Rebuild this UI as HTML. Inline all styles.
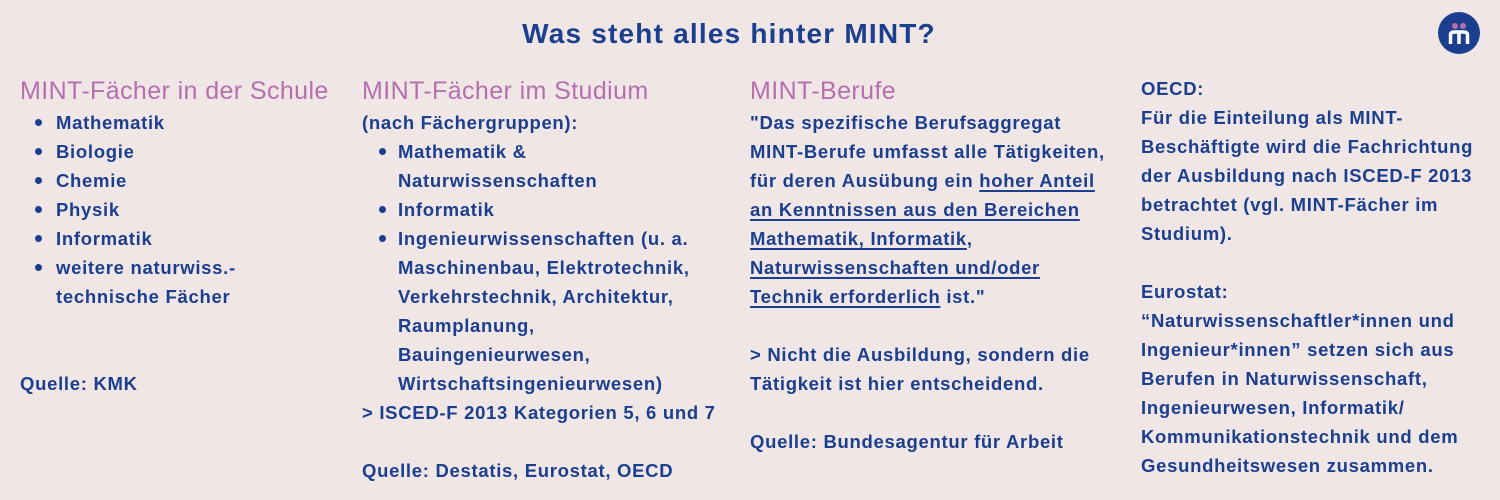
<!DOCTYPE html>
<html><head><meta charset="utf-8"><style>
body{margin:0;width:1500px;height:500px;background:#efe6e5;overflow:hidden;position:relative;font-family:"Liberation Sans",sans-serif;}
.l{position:absolute;white-space:nowrap;font-size:18.5px;letter-spacing:0.7px;font-weight:bold;color:#1b3f8e;line-height:29px;}
.h{position:absolute;white-space:nowrap;font-size:25px;letter-spacing:0.4px;color:#b56fae;line-height:29px;}
.d{position:absolute;width:7px;height:7px;border-radius:50%;background:#1b3f8e;}
u{text-decoration-thickness:2px;text-underline-offset:3px;}
</style></head><body>
<div style="position:absolute;left:0;width:1458px;top:18px;text-align:center;font-size:28px;letter-spacing:1.2px;font-weight:bold;color:#1b3f8e;">Was steht alles hinter MINT?</div>
<svg style="position:absolute;left:1438px;top:12px" width="42" height="42" viewBox="0 0 42 42"><circle cx="21" cy="21" r="21" fill="#1b3f8e"/><circle cx="17" cy="14" r="3" fill="#b56fae"/><circle cx="25" cy="14" r="3" fill="#b56fae"/><path d="M12.5 32V23q0-3 4-3h9q4 0 4 3v9M21 21v11" stroke="#fff" stroke-width="3.5" fill="none"/></svg>

<div class="h" style="left:20px;top:77px">MINT-Fächer in der Schule</div>
<div class="d" style="left:35px;top:119px"></div><div class="l" style="left:56px;top:108px">Mathematik</div>
<div class="d" style="left:35px;top:148px"></div><div class="l" style="left:56px;top:137px">Biologie</div>
<div class="d" style="left:35px;top:177px"></div><div class="l" style="left:56px;top:166px">Chemie</div>
<div class="d" style="left:35px;top:206px"></div><div class="l" style="left:56px;top:195px">Physik</div>
<div class="d" style="left:35px;top:235px"></div><div class="l" style="left:56px;top:224px">Informatik</div>
<div class="d" style="left:35px;top:264px"></div><div class="l" style="left:56px;top:253px">weitere naturwiss.-</div>
<div class="l" style="left:56px;top:282px">technische Fächer</div>
<div class="l" style="left:20px;top:369px">Quelle: KMK</div>

<div class="h" style="left:362px;top:77px">MINT-Fächer im Studium</div>
<div class="l" style="left:362px;top:108px">(nach Fächergruppen):</div>
<div class="d" style="left:379px;top:148px"></div><div class="l" style="left:398px;top:137px">Mathematik &amp;</div>
<div class="l" style="left:398px;top:166px">Naturwissenschaften</div>
<div class="d" style="left:379px;top:206px"></div><div class="l" style="left:398px;top:195px">Informatik</div>
<div class="d" style="left:379px;top:235px"></div><div class="l" style="left:398px;top:224px">Ingenieurwissenschaften (u. a.</div>
<div class="l" style="left:398px;top:253px">Maschinenbau, Elektrotechnik,</div>
<div class="l" style="left:398px;top:282px">Verkehrstechnik, Architektur,</div>
<div class="l" style="left:398px;top:311px">Raumplanung,</div>
<div class="l" style="left:398px;top:340px">Bauingenieurwesen,</div>
<div class="l" style="left:398px;top:369px">Wirtschaftsingenieurwesen)</div>
<div class="l" style="left:362px;top:398px">&gt; ISCED-F 2013 Kategorien 5, 6 und 7</div>
<div class="l" style="left:362px;top:456px">Quelle: Destatis, Eurostat, OECD</div>

<div class="h" style="left:750px;top:77px">MINT-Berufe</div>
<div class="l" style="left:750px;top:108px">"Das spezifische Berufsaggregat</div>
<div class="l" style="left:750px;top:137px">MINT-Berufe umfasst alle Tätigkeiten,</div>
<div class="l" style="left:750px;top:166px">für deren Ausübung ein <u>hoher Anteil</u></div>
<div class="l" style="left:750px;top:195px"><u>an Kenntnissen aus den Bereichen</u></div>
<div class="l" style="left:750px;top:224px"><u>Mathematik, Informatik</u>,</div>
<div class="l" style="left:750px;top:253px"><u>Naturwissenschaften und/oder</u></div>
<div class="l" style="left:750px;top:282px"><u>Technik erforderlich</u> ist."</div>
<div class="l" style="left:750px;top:340px">&gt; Nicht die Ausbildung, sondern die</div>
<div class="l" style="left:750px;top:369px">Tätigkeit ist hier entscheidend.</div>
<div class="l" style="left:750px;top:427px">Quelle: Bundesagentur für Arbeit</div>

<div class="l" style="left:1141px;top:74px">OECD:</div>
<div class="l" style="left:1141px;top:103px">Für die Einteilung als MINT-</div>
<div class="l" style="left:1141px;top:132px">Beschäftigte wird die Fachrichtung</div>
<div class="l" style="left:1141px;top:161px">der Ausbildung nach ISCED-F 2013</div>
<div class="l" style="left:1141px;top:190px">betrachtet (vgl. MINT-Fächer im</div>
<div class="l" style="left:1141px;top:219px">Studium).</div>
<div class="l" style="left:1141px;top:277px">Eurostat:</div>
<div class="l" style="left:1141px;top:306px">“Naturwissenschaftler*innen und</div>
<div class="l" style="left:1141px;top:335px">Ingenieur*innen” setzen sich aus</div>
<div class="l" style="left:1141px;top:364px">Berufen in Naturwissenschaft,</div>
<div class="l" style="left:1141px;top:393px">Ingenieurwesen, Informatik/</div>
<div class="l" style="left:1141px;top:422px">Kommunikationstechnik und dem</div>
<div class="l" style="left:1141px;top:451px">Gesundheitswesen zusammen.</div>
</body></html>
